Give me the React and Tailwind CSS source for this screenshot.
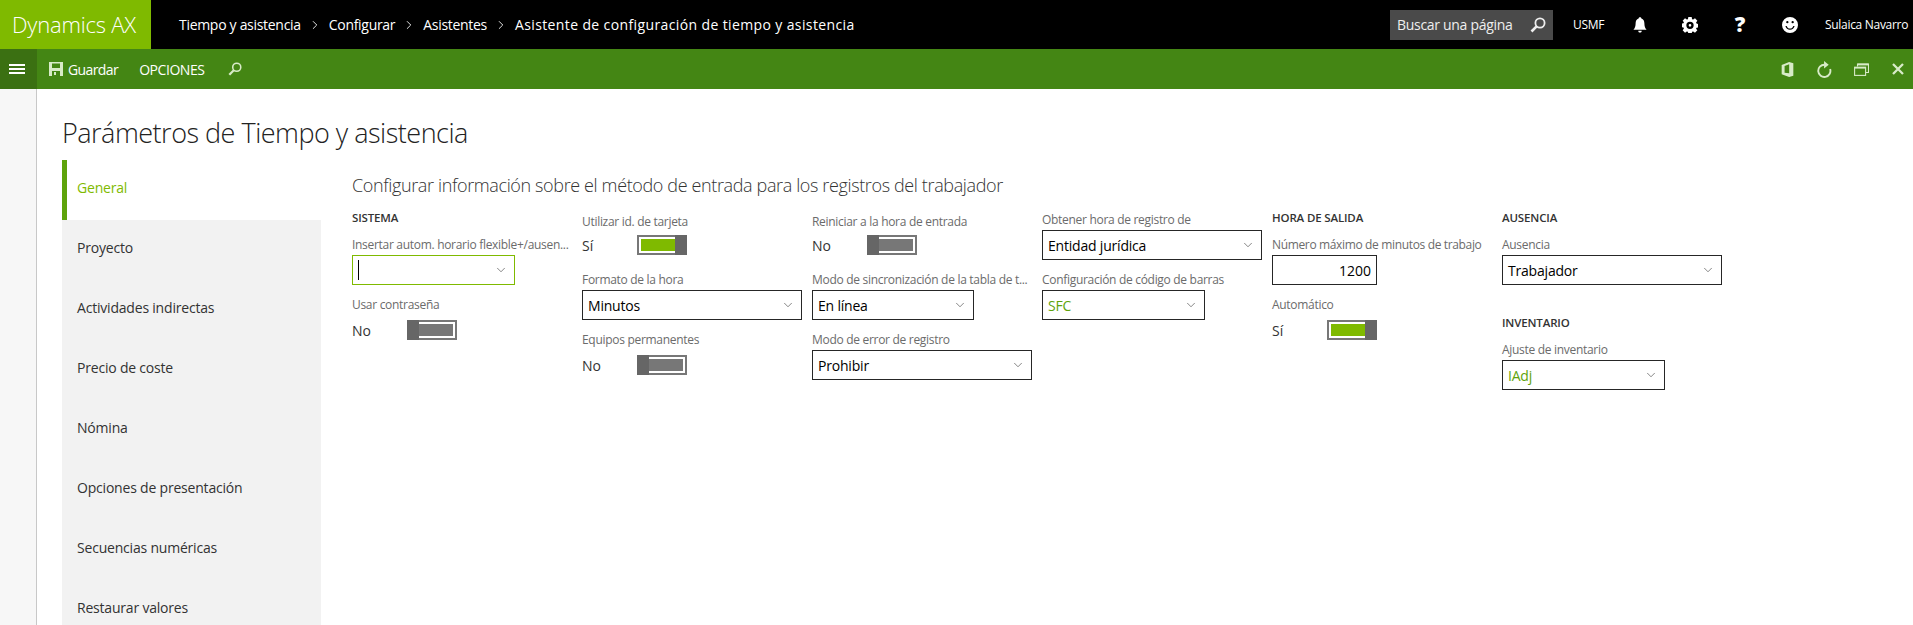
import { ChevronDown, ChevronRight } from 'lucide-react';

const FONT = "font-['Open_Sans','Liberation_Sans',sans-serif]";

const SearchIcon = ({ className }) => (
  <svg viewBox="0 0 16 16" className={className} fill="none" stroke="currentColor" strokeWidth="1.8">
    <circle cx="10" cy="6" r="4.6" />
    <path d="M6.6 9.4 1.5 14.5" strokeWidth="2.6" />
  </svg>
);

const SaveIcon = () => (
  <svg viewBox="0 0 14 14" className="w-[14px] h-[14px] text-[#d8ebc8]" fill="currentColor">
    <path fillRule="evenodd" d="M0 0h14v14H0zM3 1.500v4.500h8V1.500zM3 9v5h8V9zM5 10h2v3H5z" />
  </svg>
);

const BellIcon = () => (
  <svg viewBox="0 0 16 18" className="w-[14px] h-[16px]" fill="currentColor">
    <path d="M8 0c1 0 1.500.6 1.600 1.500C12 2.200 13 4.300 13 7c0 3.500.8 5.500 2.500 7.500H.5C2.200 12.500 3 10.500 3 7c0-2.700 1-4.800 3.400-5.500C6.500.6 7 0 8 0zM6 15.500h4c0 1.300-.9 2.200-2 2.200s-2-.9-2-2.200z" />
  </svg>
);

const GearIcon = () => (
  <svg viewBox="0 0 24 24" className="w-[16px] h-[16px]" fill="currentColor">
    <path
      fillRule="evenodd"
      d="M9.500 0h5l.6 3.200 1.700.7L19.500 2 23 5.500l-1.900 2.700.7 1.700 3.200.6v5l-3.200.6-.7 1.700L23 20l-3.500 3.500-2.700-1.900-1.700.7-.6 2.700h-5l-.6-2.700-1.700-.7L4.500 23.500 1 20l1.900-2.700-.7-1.700L-1 15v-5l3.200-.6.7-1.700L1 5.500 4.500 2l2.700 1.900 1.700-.7zM12 7a5.500 5.500 0 1 0 0 11 5.500 5.500 0 0 0 0-11zM12 10.500a2 2 0 1 1 0 4 2 2 0 0 1 0-4z"
    />
  </svg>
);

const SmileIcon = () => (
  <svg viewBox="0 0 18 18" className="w-[16px] h-[16px]" fill="currentColor">
    <path
      fillRule="evenodd"
      d="M9 0a9 9 0 1 1 0 18A9 9 0 0 1 9 0zM6 4.500a1.300 1.300 0 1 0 0 2.600 1.300 1.300 0 0 0 0-2.600zM12 4.500a1.300 1.300 0 1 0 0 2.600 1.300 1.300 0 0 0 0-2.600zM3.800 10c.6 2.700 2.600 4.300 5.200 4.300s4.600-1.600 5.200-4.300h-1.500c-.5 1.800-2 2.900-3.700 2.900S5.800 11.800 5.300 10z"
    />
  </svg>
);

const OfficeIcon = () => (
  <svg viewBox="0 0 14 18" className="w-[13px] h-[15px]" fill="currentColor">
    <path fillRule="evenodd" d="M9 0l5 1.500v15L9 18 0 14.800V3.600zM9 2.600 3.500 4.800v8l5.500.8z" />
  </svg>
);

const RefreshIcon = () => (
  <svg viewBox="0 0 16 18" className="w-[15px] h-[17px]" fill="none" stroke="currentColor" strokeWidth="2">
    <path d="M8 4A6.500 6.500 0 1 0 14 8.500" />
    <path d="M7.500 0v8L12.500 4z" fill="currentColor" stroke="none" />
  </svg>
);

const RestoreIcon = () => (
  <svg viewBox="0 0 15 13" className="w-[15px] h-[13px]" fill="none" stroke="currentColor" strokeWidth="1.100">
    <path d="M3.500 3.500V1h11v8.500H12" />
    <path d="M3.500 1.500h11" strokeWidth="1.800" />
    <rect x=".6" y="4.200" width="11" height="8.200" />
    <path d="M.6 4.800h11" strokeWidth="1.600" />
  </svg>
);

const CloseIcon = () => (
  <svg viewBox="0 0 12 12" className="w-[12px] h-[12px]" fill="none" stroke="currentColor" strokeWidth="2.300">
    <path d="M1 1l10 10M11 1 1 11" />
  </svg>
);

const Heading = ({ children, className = '' }) => (
  <div className={`h-[25px] text-[11.500px] leading-[16px] font-semibold text-[#333] tracking-[-0.15px] ${className}`}>{children}</div>
);

const Label = ({ children, className = '' }) => (
  <div className={`h-[20px] text-[12px] leading-[20px] text-[#6b6b6b] tracking-[-0.3px] whitespace-nowrap ${className}`}>{children}</div>
);

const Select = ({ label, value, width, green, focus }) => (
  <div className="mb-[10px]">
    <Label>{label}</Label>
    <div
      className={`h-[30px] ${width} flex items-center justify-between pl-[5px] pr-[6px] border text-[14px] tracking-[-0.2px] ${
        focus ? 'border-[#7fba00]' : 'border-[#262626]'
      } ${green ? 'text-[#5ea30b]' : 'text-black'}`}
    >
      {focus ? <span className="w-px h-[20px] bg-black" /> : <span>{value}</span>}
      <ChevronDown size={14} strokeWidth={1.1} className="text-[#444]" />
    </div>
  </div>
);

const Toggle = ({ label, on, low }) => (
  <div className="mb-[10px]">
    <Label className={low ? 'pt-[2px]' : ''}>{label}</Label>
    <div className="h-[30px] flex items-center text-[14px] text-[#333]">
      <span className="w-[55px]">{on ? 'Sí' : 'No'}</span>
      <div className="w-[50px] h-[20px] flex">
        {!on && <div className="w-[12px] bg-[#666]" />}
        <div
          className={`flex-1 border-y-2 border-[#777] ${on ? 'border-l-2' : 'border-r-2'}`}
        >
          <div
            className={`h-full border-y-2 border-white ${
              on ? 'border-l-2 bg-[#7fba00]' : 'border-r-2 bg-[#777]'
            }`}
          />
        </div>
        {on && <div className="w-[12px] bg-[#666]" />}
      </div>
    </div>
  </div>
);

const navItems = [
  'General',
  'Proyecto',
  'Actividades indirectas',
  'Precio de coste',
  'Nómina',
  'Opciones de presentación',
  'Secuencias numéricas',
  'Restaurar valores',
];

export default function App() {
  return (
    <div className={`h-[625px] w-[1913px] overflow-hidden bg-white ${FONT}`}>
      {/* top bar */}
      <div className="h-[49px] bg-black text-white flex items-center">
        <div className="w-[151px] h-full bg-[#7fba00] pl-[12px] text-[22px] leading-[49px] tracking-[-0.2px] font-light">
          Dynamics AX
        </div>
        <div className="ml-[28px] flex items-center text-[14px] tracking-[-0.3px]">
          <span>Tiempo y asistencia</span>
          <ChevronRight size={14} strokeWidth={1.500} className="mx-[7px]" />
          <span>Configurar</span>
          <ChevronRight size={14} strokeWidth={1.500} className="mx-[7px]" />
          <span>Asistentes</span>
          <ChevronRight size={14} strokeWidth={1.500} className="mx-[7px]" />
          <span className="tracking-[0.38px]">Asistente de configuración de tiempo y asistencia</span>
        </div>
        <div className="ml-auto w-[163px] h-[30px] bg-[#4a4a4a] flex items-center justify-between pl-[7px] pr-[7px] text-[14px] tracking-[-0.3px] text-[#eee]">
          <span>Buscar una página</span>
          <SearchIcon className="w-[16px] h-[16px]" />
        </div>
        <span className="ml-[20px] w-[30px] text-[12px] tracking-[-0.3px]">USMF</span>
        <div className="ml-[12px] w-[50px] flex justify-center"><BellIcon /></div>
        <div className="w-[50px] flex justify-center"><GearIcon /></div>
        <div className="w-[50px] flex justify-center text-[21px] font-extrabold leading-none">?</div>
        <div className="w-[50px] flex justify-center"><SmileIcon /></div>
        <span className="ml-[10px] w-[88px] text-[12px] tracking-[-0.3px] whitespace-nowrap">Sulaica Navarro</span>
      </div>

      {/* action bar */}
      <div className="h-[40px] bg-[#448614] text-white flex items-center text-[14px] tracking-[-0.3px]">
        <div className="w-[37px] h-full pr-[3px] bg-[#3b7012] flex flex-col items-center justify-center gap-[2px]">
          <span className="w-[16px] h-[2px] bg-white" />
          <span className="w-[16px] h-[2px] bg-white" />
          <span className="w-[16px] h-[2px] bg-white" />
        </div>
        <div className="ml-[12px]"><SaveIcon /></div>
        <span className="ml-[5px] tracking-[-0.6px]">Guardar</span>
        <span className="ml-[21px] tracking-[-0.45px]">OPCIONES</span>
        <SearchIcon className="ml-[24px] w-[14px] h-[14px] text-[#d8ebc8]" />
        <div className="ml-auto flex items-center text-[#d8ebc8]">
          <div className="w-[37px] flex justify-center"><OfficeIcon /></div>
          <div className="w-[37px] flex justify-center"><RefreshIcon /></div>
          <div className="w-[37px] flex justify-center"><RestoreIcon /></div>
          <div className="ml-[3px] w-[30px] flex justify-center"><CloseIcon /></div>
        </div>
      </div>

      <div className="flex h-[536px]">
        <div className="w-[37px] bg-[#f7f7f7] border-r border-[#c8c8c8]" />
        <div className="flex-1 pl-[25px]">
          <h1 className="h-[71px] pt-[26px] text-[27px] leading-[36px] font-light text-[#222] tracking-[-0.5px]">
            Parámetros de Tiempo y asistencia
          </h1>
          <div className="flex">
            <div className="w-[259px]">
              {navItems.map((item, i) => (
                <div
                  key={item}
                  className={`h-[60px] flex items-center pb-[5px] text-[14px] tracking-[-0.2px] ${
                    i === 0
                      ? 'border-l-[5px] border-[#5ea30b] pl-[10px] bg-white text-[#7fba00]'
                      : 'pl-[15px] bg-[#f2f2f2] text-[#333]'
                  }`}
                >
                  {item}
                </div>
              ))}
            </div>
            <div className="pl-[31px]">
              <div className="h-[50px] pt-[11px] text-[18px] leading-[28px] font-light text-[#333] tracking-[-0.37px] whitespace-nowrap">
                Configurar información sobre el método de entrada para los registros del trabajador
              </div>
              <div className="grid grid-cols-[230px_230px_230px_230px_230px_230px]">
                <div>
                  <Heading>SISTEMA</Heading>
                  <Select label="Insertar autom. horario flexible+/ausen..." width="w-[163px]" focus />
                  <Toggle label="Usar contraseña" />
                </div>
                <div>
                  <Toggle label="Utilizar id. de tarjeta" on low />
                  <Select label="Formato de la hora" value="Minutos" width="w-[220px]" />
                  <Toggle label="Equipos permanentes" />
                </div>
                <div>
                  <Toggle label="Reiniciar a la hora de entrada" low />
                  <Select label="Modo de sincronización de la tabla de t..." value="En línea" width="w-[162px]" />
                  <Select label="Modo de error de registro" value="Prohibir" width="w-[220px]" />
                </div>
                <div>
                  <Select label="Obtener hora de registro de" value="Entidad jurídica" width="w-[220px]" />
                  <Select label="Configuración de código de barras" value="SFC" width="w-[163px]" green />
                </div>
                <div>
                  <Heading>HORA DE SALIDA</Heading>
                  <div className="mb-[10px]">
                    <Label className="tracking-[-0.35px]">Número máximo de minutos de trabajo</Label>
                    <div className="w-[105px] h-[30px] border border-[#262626] flex items-center justify-end pr-[5px] text-[14px] text-black">
                      1200
                    </div>
                  </div>
                  <Toggle label="Automático" on />
                </div>
                <div>
                  <Heading>AUSENCIA</Heading>
                  <Select label="Ausencia" value="Trabajador" width="w-[220px]" />
                  <Heading className="mt-[30px]">INVENTARIO</Heading>
                  <Select label="Ajuste de inventario" value="IAdj" width="w-[163px]" green />
                </div>
              </div>
            </div>
          </div>
        </div>
      </div>
    </div>
  );
}
